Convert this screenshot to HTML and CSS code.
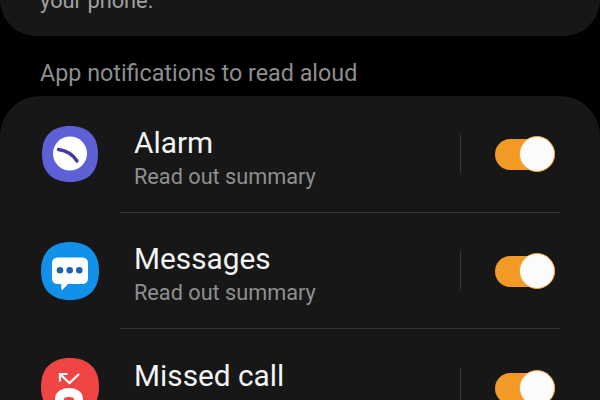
FILE: index.html
```html
<!DOCTYPE html>
<html lang="en">
<head>
<meta charset="utf-8">
<title>App notifications to read aloud</title>
<link rel="stylesheet" href="styles.css">
</head>
<body>
<div class="screen">
  <section class="card card-top">
    <p class="top-text">your phone.</p>
  </section>
  <h2 class="section-title">App notifications to read aloud</h2>
  <section class="card card-list">
    <div class="row">
      <div class="app-icon icon-alarm">
        <svg viewBox="0 0 56 56" width="56" height="56">
          <path fill="#5f5fd6" d="M28 0C45 0 56 9 56 28S45 56 28 56 0 47 0 28 11 0 28 0Z"/>
          <circle cx="28" cy="27.500" r="17" fill="#fff"/>
          <path d="M16.500 23.500C23 24.500 30 27 35 35" fill="none" stroke="#453c9c" stroke-width="3.400" stroke-linecap="round"/>
        </svg>
      </div>
      <div class="row-body">
        <div class="labels">
          <div class="name">Alarm</div>
          <div class="sub">Read out summary</div>
        </div>
        <div class="sep"></div>
        <div class="switch"><span class="knob"></span></div>
      </div>
    </div>
    <div class="row">
      <div class="app-icon icon-wide">
        <svg viewBox="0 0 58 58" width="58" height="58">
          <path fill="#1291ea" d="M29 0C47 0 58 10 58 29S47 58 29 58 0 48 0 29 11 0 29 0Z"/>
          <path fill="#fff" d="M16.500 15.500H41.500A5.500 5.500 0 0 1 47 21V36.500A5.500 5.500 0 0 1 41.500 42H27L20.700 48.500 20 42H16.500A5.500 5.500 0 0 1 11 36.500V21A5.500 5.500 0 0 1 16.500 15.500Z"/>
          <circle cx="19" cy="28.300" r="3.300" fill="#1a64ae"/>
          <circle cx="28.700" cy="28.300" r="3.300" fill="#1a64ae"/>
          <circle cx="38.300" cy="28.300" r="3.300" fill="#1a64ae"/>
        </svg>
      </div>
      <div class="row-body">
        <div class="labels">
          <div class="name">Messages</div>
          <div class="sub">Read out summary</div>
        </div>
        <div class="sep"></div>
        <div class="switch"><span class="knob"></span></div>
      </div>
    </div>
    <div class="row">
      <div class="app-icon icon-wide">
        <svg viewBox="0 0 58 58" width="58" height="58">
          <path fill="#f04545" d="M29 0C47 0 58 10 58 29S47 58 29 58 0 48 0 29 11 0 29 0Z"/>
          <path d="M38 16L28.500 25 19.500 16.500M19 23.500V16H26.500" fill="none" stroke="#fff" stroke-width="2.200"/>
          <path d="M18.500 50V41C18.500 36.500 23 34.500 28 34.500S37.500 36.500 37.500 41V50" fill="none" stroke="#fff" stroke-width="9"/>
        </svg>
      </div>
      <div class="row-body">
        <div class="labels">
          <div class="name">Missed call</div>
          <div class="sub">Read out summary</div>
        </div>
        <div class="sep"></div>
        <div class="switch"><span class="knob"></span></div>
      </div>
    </div>
  </section>
</div>
</body>
</html>
```
FILE: styles.css
```css
html, body {
  margin: 0;
  padding: 0;
  background: #000;
}
.screen {
  width: 600px;
  height: 400px;
  overflow: hidden;
  font-family: Roboto, "Liberation Sans", sans-serif;
}
.card {
  background: #171717;
}
.card-top {
  height: 36px;
  border-radius: 0 0 36px 36px;
  overflow: hidden;
  display: flex;
  align-items: flex-end;
  padding-left: 40px;
}
.top-text {
  margin: 0 0 20px;
  font-size: 21.800px;
  line-height: 30px;
  color: #a0a0a0;
}
.section-title {
  margin: 0;
  height: 60px;
  padding-left: 40px;
  box-sizing: border-box;
  padding-top: 24px;
  font-size: 23.300px;
  line-height: 27px;
  font-weight: 400;
  color: #8e8e8e;
}
.card-list {
  border-radius: 40px 40px 0 0;
  padding: 0 40px;
}
.row {
  display: flex;
  height: 116.500px;
}
.app-icon {
  width: 80px;
  display: flex;
  align-items: center;
  flex: none;
  box-sizing: border-box;
}
.icon-alarm {
  padding-left: 2px;
}
.icon-wide {
  padding-left: 1px;
}
.row-body {
  flex: 1;
  display: flex;
  align-items: center;
  border-bottom: 1px solid #333;
  padding-right: 5px;
}
.row:last-child .row-body {
  border-bottom: 0;
}
.labels {
  flex: 1;
  padding-left: 14px;
  padding-top: 9px;
}
.name {
  font-size: 29.800px;
  line-height: 36px;
  color: #f4f4f4;
}
.sub {
  margin-top: 1px;
  font-size: 21.700px;
  line-height: 30px;
  color: #8f8f8f;
}
.sep {
  width: 1px;
  height: 38px;
  background: #3a3a3a;
  margin-right: 34px;
}
.switch {
  position: relative;
  width: 60px;
  height: 31px;
  margin-top: 2px;
  border-radius: 16px;
  background: #f39a26;
}
.knob {
  position: absolute;
  right: 0;
  top: -3px;
  width: 36px;
  height: 36px;
  box-sizing: border-box;
  border-radius: 50%;
  background: #fbfbfb;
  border: 1.500px solid #f2a33a;
}
```
